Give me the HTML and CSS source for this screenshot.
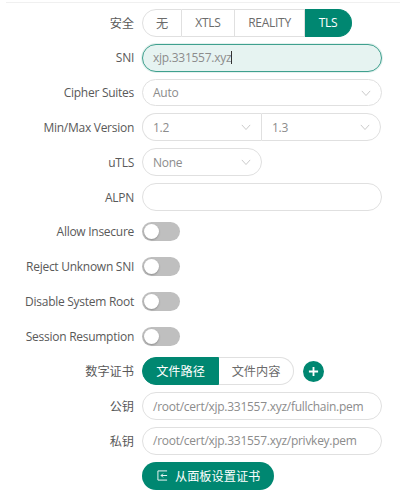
FILE: index.html
```html
<!DOCTYPE html>
<html lang="en">
<head>
    <meta charset="UTF-8">
    <title>TLS Settings</title>
    <link rel="stylesheet" href="styles.css">
</head>
<body>
    <hr class="divider">
    <form class="form">
        <div class="row">
            <label class="label cjk">安全</label>
            <div class="radio-group">
                <span class="radio cjk">无</span>
                <span class="radio xtls">XTLS</span>
                <span class="radio reality">REALITY</span>
                <span class="radio tls active">TLS</span>
            </div>
        </div>
        <div class="row">
            <label class="label">SNI</label>
            <div class="input focused">xjp.331557.xyz<span class="caret"></span></div>
        </div>
        <div class="row">
            <label class="label">Cipher Suites</label>
            <div class="input select">Auto
                <svg class="arrow" viewBox="0 0 12 12"><path d="M1 3.500l5 5.500 5-5.500"/></svg>
            </div>
        </div>
        <div class="row">
            <label class="label">Min/Max Version</label>
            <div class="select-pair">
                <div class="input select half left">1.2
                    <svg class="arrow" viewBox="0 0 12 12"><path d="M1 3.500l5 5.500 5-5.500"/></svg>
                </div>
                <div class="input select half right">1.3
                    <svg class="arrow" viewBox="0 0 12 12"><path d="M1 3.500l5 5.500 5-5.500"/></svg>
                </div>
            </div>
        </div>
        <div class="row">
            <label class="label">uTLS</label>
            <div class="input select short">None
                <svg class="arrow" viewBox="0 0 12 12"><path d="M1 3.500l5 5.500 5-5.500"/></svg>
            </div>
        </div>
        <div class="row">
            <label class="label">ALPN</label>
            <div class="input"></div>
        </div>
        <div class="row">
            <label class="label">Allow Insecure</label>
            <span class="switch"></span>
        </div>
        <div class="row">
            <label class="label">Reject Unknown SNI</label>
            <span class="switch"></span>
        </div>
        <div class="row">
            <label class="label">Disable System Root</label>
            <span class="switch"></span>
        </div>
        <div class="row">
            <label class="label">Session Resumption</label>
            <span class="switch"></span>
        </div>
        <div class="row">
            <label class="label cjk">数字证书</label>
            <div class="radio-group">
                <span class="radio cjk path active">文件路径</span>
                <span class="radio cjk content">文件内容</span>
            </div>
            <button type="button" class="add-btn">
                <svg viewBox="0 0 12 12"><path d="M6 1v10M1 6h10"/></svg>
            </button>
        </div>
        <div class="row">
            <label class="label cjk">公钥</label>
            <div class="input">/root/cert/xjp.331557.xyz/fullchain.pem</div>
        </div>
        <div class="row">
            <label class="label cjk">私钥</label>
            <div class="input">/root/cert/xjp.331557.xyz/privkey.pem</div>
        </div>
        <div class="row">
            <span class="label"></span>
            <button type="button" class="panel-btn cjk">
                <svg viewBox="0 0 12 12"><path d="M11 1H1v10h10M11 6H4.500M6.500 4l-2 2 2 2"/></svg>
                从面板设置证书
            </button>
        </div>
    </form>
</body>
</html>
```

FILE: styles.css
```css
* {
    box-sizing: border-box;
}

body {
    margin: 0;
    background: #fff;
    color: #595959;
    font-family: "Open Sans", "Noto Sans CJK SC", sans-serif;
    font-size: 12px;
    letter-spacing: -0.27px;
    overflow: hidden;
}

.cjk {
    font-size: 12.2px;
    letter-spacing: 0;
}

.divider {
    height: 1px;
    margin: 2px 0 0 6px;
    border: none;
    background: #f0f0f0;
}

.form {
    display: flex;
    flex-direction: column;
    gap: 7px;
    padding: 6px 18px 0 0;
}

.row {
    display: flex;
    align-items: center;
    height: 27.83px;
}

.label {
    flex: 0 0 134px;
    margin-right: 8px;
    text-align: right;
    white-space: nowrap;
}

/* radio buttons */
.radio-group {
    display: flex;
    height: 100%;
}

.radio {
    display: flex;
    align-items: center;
    justify-content: center;
    width: 53px;
    border: 1px solid #e0e0e0;
    border-left: none;
    color: #6b6b6b;
}

.radio:first-child {
    width: 40px;
    border-left: 1px solid #e0e0e0;
    border-radius: 14px 0 0 14px;
}

.radio:last-child {
    border-radius: 0 14px 14px 0;
}

.reality {
    width: 70px;
}

.tls {
    width: 47px;
}

.radio.path {
    width: 77px;
}

.radio.content {
    width: 75px;
}

.radio.active,
.radio.active:first-child {
    border-color: #008771;
    background: #008771;
    color: #fff;
}

/* inputs */
.input {
    position: relative;
    display: flex;
    align-items: center;
    flex: 1;
    height: 100%;
    padding: 0 10px;
    border: 1px solid #e0e0e0;
    border-radius: 14px;
    color: #8c8c8c;
    white-space: nowrap;
}

.input.focused {
    border-color: #3fa08e;
    background: #e6f3f1;
    box-shadow: 0 0 0 1px #e4f1ee;
}

.caret {
    width: 1px;
    height: 13px;
    background: #333;
}

.arrow {
    position: absolute;
    right: 10px;
    top: 8px;
    width: 10px;
    height: 10px;
    fill: none;
    stroke: #bfbfbf;
    stroke-width: 1;
}

.select-pair {
    display: flex;
    flex: 1;
    height: 100%;
    margin-right: 1px;
}

.half.left {
    flex: 0 0 119px;
    border-right: none;
    border-radius: 14px 0 0 14px;
}

.half.right {
    border-radius: 0 14px 14px 0;
}

.short {
    flex: 0 0 120px;
}

/* switches */
.switch {
    position: relative;
    width: 38px;
    height: 19px;
    border-radius: 10px;
    background: #bfbfbf;
}

.switch::after {
    content: "";
    position: absolute;
    left: 2px;
    top: 2px;
    width: 15px;
    height: 15px;
    border-radius: 50%;
    background: #fff;
    box-shadow: 0 1px 2px rgba(0, 0, 0, 0.25);
}

/* buttons */
.add-btn {
    display: flex;
    align-items: center;
    justify-content: center;
    width: 21px;
    height: 21px;
    margin-left: 9px;
    padding: 0;
    border: none;
    border-radius: 50%;
    background: #008771;
}

.add-btn svg {
    width: 11px;
    height: 11px;
    fill: none;
    stroke: #fff;
    stroke-width: 2;
}

.panel-btn {
    display: flex;
    align-items: center;
    gap: 7px;
    height: 100%;
    padding: 0 14px 0 15px;
    border: none;
    border-radius: 14px;
    background: #008771;
    color: #fff;
    font-family: inherit;
    font-size: 12.2px;
}

.panel-btn svg {
    width: 11px;
    height: 11px;
    fill: none;
    stroke: #fff;
    stroke-width: 1;
}
```
